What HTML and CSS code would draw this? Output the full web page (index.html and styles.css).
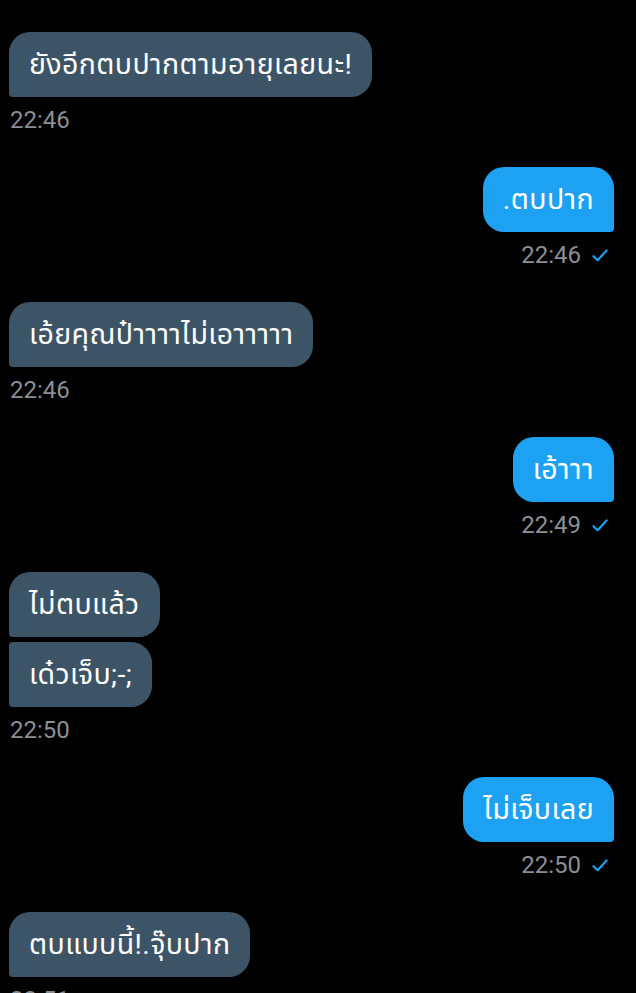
FILE: index.html
```html
<!DOCTYPE html>
<html lang="th">
<head>
    <meta charset="UTF-8">
    <meta name="viewport" content="width=device-width, initial-scale=1.0">
    <title>ข้อความ</title>
    <link rel="stylesheet" href="styles.css">
</head>
<body>
    <div class="chat">
        <div class="msg in">
            <div class="bubble">ยังอีกตบปากตามอายุเลยนะ!</div>
            <div class="meta"><span class="time">22:46</span></div>
        </div>
        <div class="msg out">
            <div class="bubble">.ตบปาก</div>
            <div class="meta"><span class="time">22:46</span><svg class="tick" viewBox="0 0 16 13"><path d="M1.5 7.2 L5.6 11.2 L14.6 1.5" /></svg></div>
        </div>
        <div class="msg in">
            <div class="bubble">เอ้ยคุณป๋าาาาไม่เอาาาาา</div>
            <div class="meta"><span class="time">22:46</span></div>
        </div>
        <div class="msg out">
            <div class="bubble">เอ้าาา</div>
            <div class="meta"><span class="time">22:49</span><svg class="tick" viewBox="0 0 16 13"><path d="M1.5 7.2 L5.6 11.2 L14.6 1.5" /></svg></div>
        </div>
        <div class="msg in">
            <div class="bubble first">ไม่ตบแล้ว</div>
            <div class="bubble last">เด๋วเจ็บ;-;</div>
            <div class="meta"><span class="time">22:50</span></div>
        </div>
        <div class="msg out">
            <div class="bubble">ไม่เจ็บเลย</div>
            <div class="meta"><span class="time">22:50</span><svg class="tick" viewBox="0 0 16 13"><path d="M1.5 7.2 L5.6 11.2 L14.6 1.5" /></svg></div>
        </div>
        <div class="msg in">
            <div class="bubble">ตบแบบนี้!.จุ๊บปาก</div>
            <div class="meta"><span class="time">22:51</span></div>
        </div>
    </div>
</body>
</html>
```

FILE: styles.css
```css
:root {
    --background: #000000;
    --incoming: #3d5466;
    --outgoing: #1da1f2;
    --text: #ffffff;
    --muted: #8b8f94;
}
body {
    margin: 0;
    background-color: var(--background);
    color: var(--text);
    font-family: Roboto, "Noto Sans Thai", "Noto Sans", "DejaVu Sans", sans-serif;
    overflow: hidden;
}
.chat {
    display: flex;
    flex-direction: column;
    padding: 32px 22px 0 9px;
}
.msg {
    display: flex;
    flex-direction: column;
    gap: 5px;
    margin-bottom: 33px;
}
.msg.in {
    align-items: flex-start;
}
.msg.out {
    align-items: flex-end;
}
.bubble {
    font-size: 28.5px;
    letter-spacing: 0.4px;
    line-height: 35px;
    padding: 15px 20px;
    border-radius: 21px;
    white-space: nowrap;
}
.msg.in .bubble {
    background-color: var(--incoming);
    border-bottom-left-radius: 4px;
}
.msg.in .bubble.last {
    border-top-left-radius: 4px;
}
.msg.out .bubble {
    background-color: var(--outgoing);
    border-bottom-right-radius: 4px;
}
.meta {
    display: flex;
    align-items: center;
    gap: 11px;
    margin-top: 4px;
    font-size: 24px;
    line-height: 28px;
    color: var(--muted);
}
.msg.in .meta {
    padding-left: 1px;
}
.msg.out .meta {
    padding-right: 6px;
}
.tick {
    width: 16px;
    height: 13px;
}
.tick path {
    fill: none;
    stroke: var(--outgoing);
    stroke-width: 2.2;
    stroke-linecap: round;
    stroke-linejoin: round;
}
```
